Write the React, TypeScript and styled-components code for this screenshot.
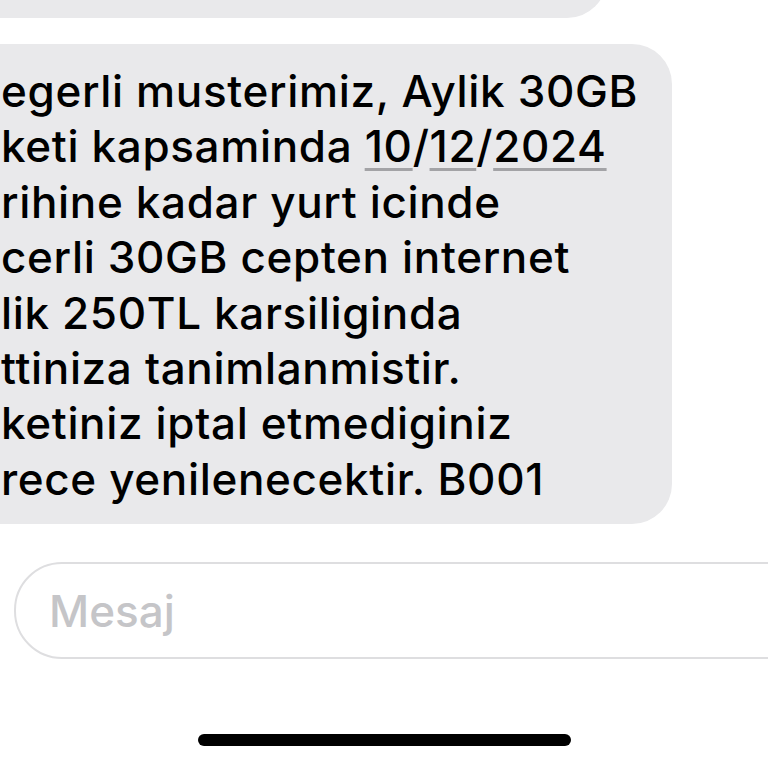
import styled, { createGlobalStyle } from "styled-components";

const GlobalStyle = createGlobalStyle`
  html, body {
    margin: 0;
    padding: 0;
    background: #ffffff;
  }
  body {
    font-family: Inter, "Liberation Sans", "Noto Sans", sans-serif;
    -webkit-font-smoothing: antialiased;
  }
`;

const Screen = styled.div`
  width: 768px;
  height: 768px;
  overflow: hidden;
  background: #ffffff;
  display: flex;
  flex-direction: column;
`;

const Thread = styled.div`
  display: flex;
  flex-direction: column;
  gap: 26px;
`;

const Bubble = styled.div<{ $width: number; $height?: number; $lift?: number }>`
  box-sizing: border-box;
  width: ${(p) => p.$width}px;
  ${(p) => (p.$height ? `height: ${p.$height}px;` : "")}
  margin-left: -60px;
  margin-top: ${(p) => (p.$lift ? -p.$lift : 0)}px;
  background: #e9e9eb;
  border-radius: 40px;
`;

const MessageText = styled.div`
  padding: 20px 20px 17px 61px;
  color: #000000;
  font-size: 44px;
  font-weight: 500;
  letter-spacing: 0.65px;
  line-height: 55.4px;
  white-space: nowrap;
`;

const Line = styled.div``;

const DataLink = styled.span`
  text-decoration: underline;
  text-decoration-color: #a3a3a6;
  text-decoration-thickness: 3px;
  text-underline-offset: 6px;
`;

const Composer = styled.div`
  box-sizing: border-box;
  margin: 38px -60px 0 14px;
  height: 97px;
  border: 2px solid #dedee0;
  border-radius: 48px;
  display: flex;
  align-items: center;
  padding-left: 33px;
`;

const Placeholder = styled.span`
  color: #c5c5c8;
  font-size: 44px;
  font-weight: 500;
`;

const HomeBar = styled.div`
  align-self: center;
  margin-top: 75px;
  width: 373px;
  height: 12px;
  border-radius: 6px;
  background: #000000;
`;

const lines: React.ReactNode[] = [
  "egerli musterimiz, Aylik 30GB",
  <>
    keti kapsaminda <DataLink>10</DataLink>/<DataLink>12</DataLink>/
    <DataLink>2024</DataLink>
  </>,
  "rihine kadar yurt icinde",
  "cerli 30GB cepten internet",
  "lik 250TL karsiliginda",
  "ttiniza tanimlanmistir.",
  "ketiniz iptal etmediginiz",
  "rece yenilenecektir. B001",
];

export default function App() {
  return (
    <>
      <GlobalStyle />
      <Screen>
        <Thread>
          <Bubble $width={667} $height={80} $lift={62} />
          <Bubble $width={732}>
            <MessageText>
              {lines.map((l, i) => (
                <Line key={i}>{l}</Line>
              ))}
            </MessageText>
          </Bubble>
        </Thread>
        <Composer>
          <Placeholder>Mesaj</Placeholder>
        </Composer>
        <HomeBar />
      </Screen>
    </>
  );
}
